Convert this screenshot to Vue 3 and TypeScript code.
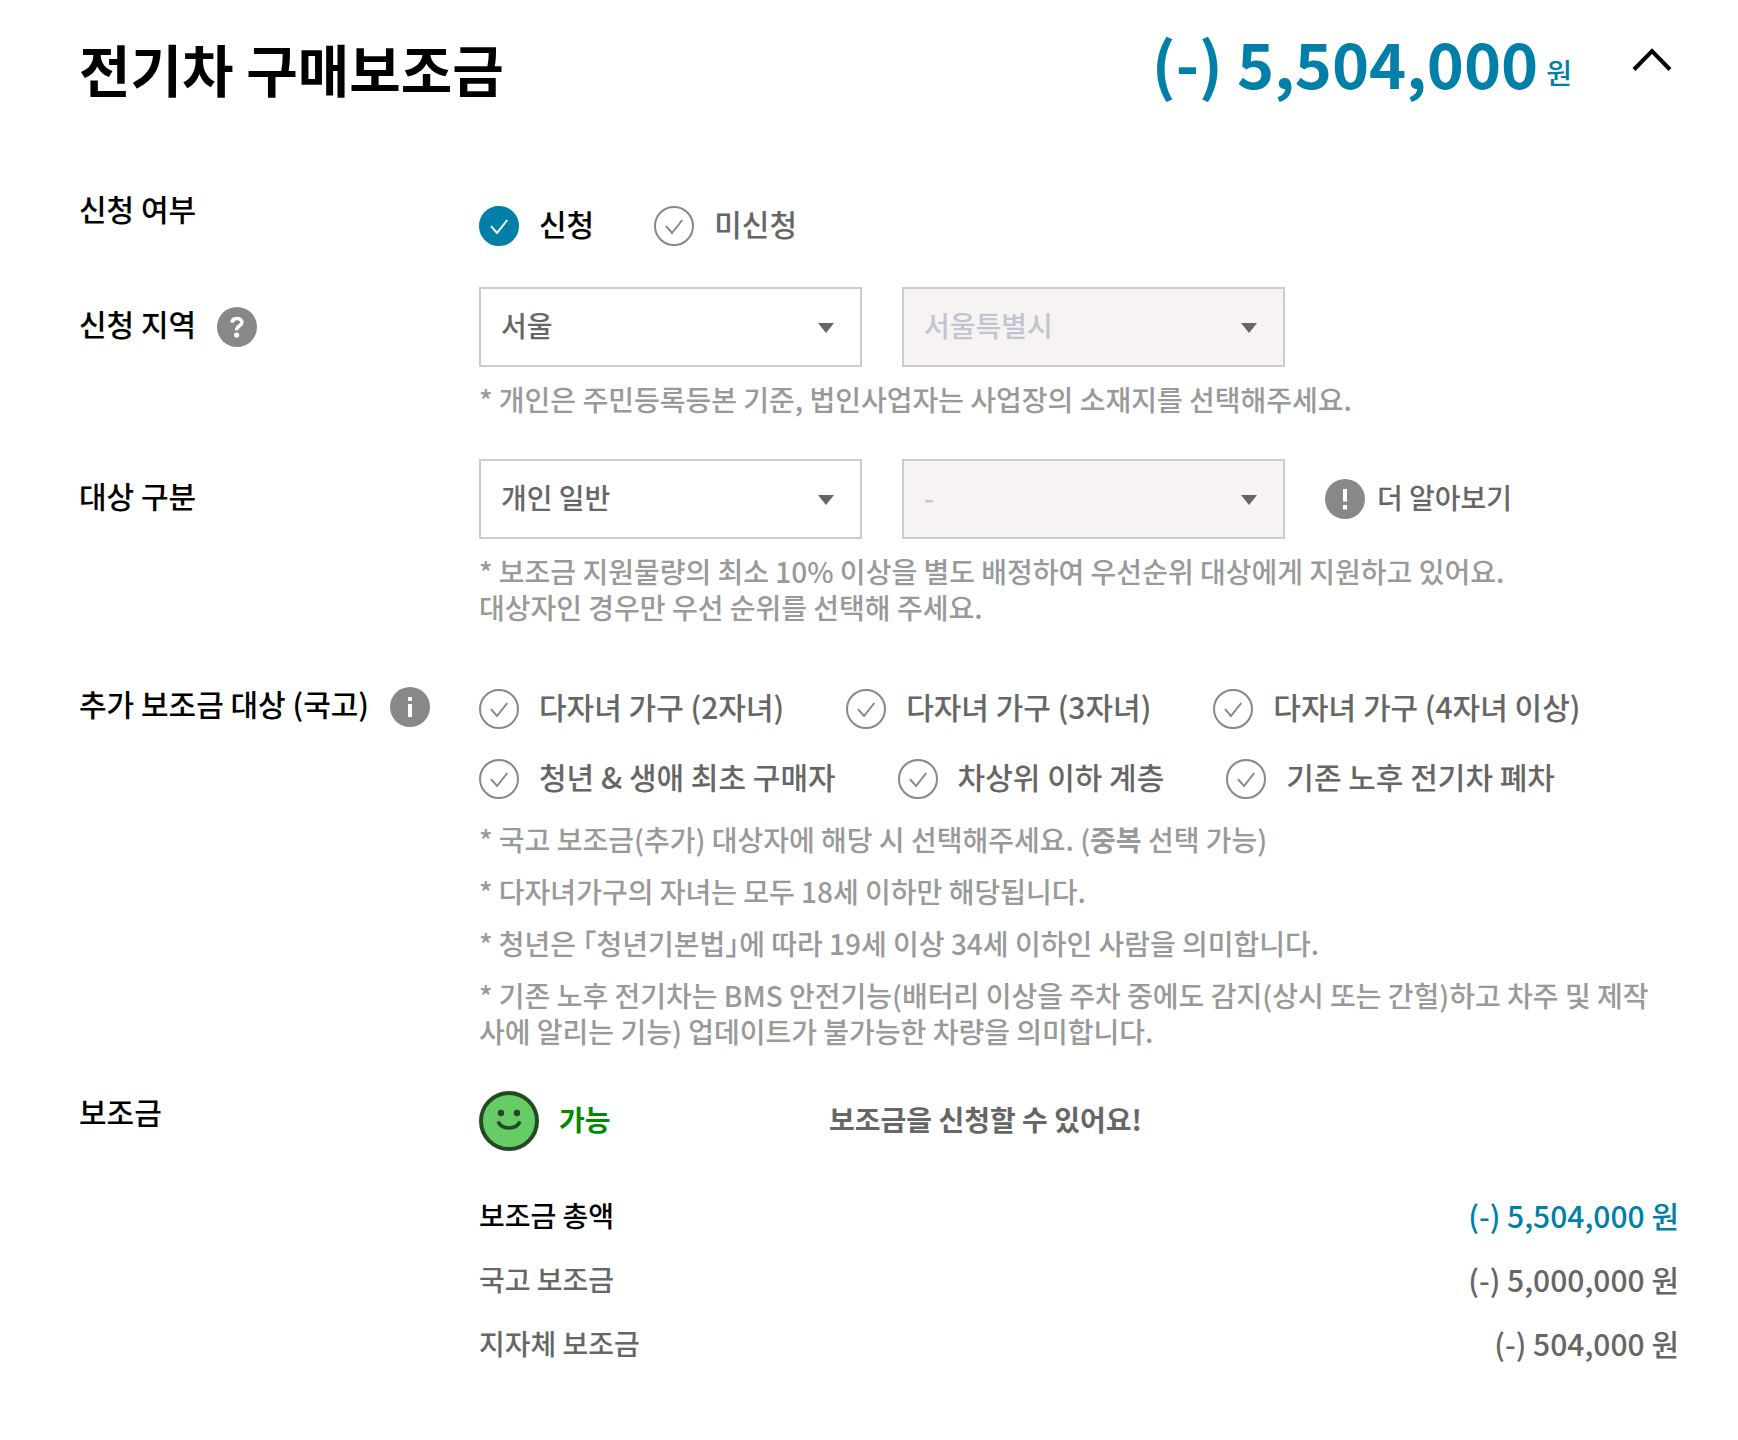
<script setup lang="ts">
import { ref } from 'vue'

interface Option {
  id: string
  label: string
}

interface Amount {
  label: string
  value: string
  total?: boolean
}

const applyOptions: Option[] = [
  { id: 'apply', label: '신청' },
  { id: 'skip', label: '미신청' },
]

const extraRows: Option[][] = [
  [
    { id: 'child2', label: '다자녀 가구 (2자녀)' },
    { id: 'child3', label: '다자녀 가구 (3자녀)' },
    { id: 'child4', label: '다자녀 가구 (4자녀 이상)' },
  ],
  [
    { id: 'youth', label: '청년 & 생애 최초 구매자' },
    { id: 'lowIncome', label: '차상위 이하 계층' },
    { id: 'oldEv', label: '기존 노후 전기차 폐차' },
  ],
]

const targetNote =
  '* 보조금 지원물량의 최소 10% 이상을 별도 배정하여 우선순위 대상에게 지원하고 있어요.\n대상자인 경우만 우선 순위를 선택해 주세요.'

const amounts: Amount[] = [
  { label: '보조금 총액', value: '(-) 5,504,000 원', total: true },
  { label: '국고 보조금', value: '(-) 5,000,000 원' },
  { label: '지자체 보조금', value: '(-) 504,000 원' },
]

const open = ref(true)
const applied = ref('apply')
const extras = ref<string[]>([])
const region = ref('서울')
const target = ref('개인 일반')
</script>

<template>
  <section class="subsidy">
    <header class="head">
      <h2 class="title">전기차 구매보조금</h2>
      <p class="price"><strong>(-) 5,504,000</strong><span>원</span></p>
      <button class="toggle" type="button" aria-label="접기" :aria-expanded="open" @click="open = !open">
        <svg width="40" height="24" viewBox="0 0 40 24" fill="none" stroke="#000" stroke-width="4">
          <path d="M2 21.5 20 3 38 21.5" />
        </svg>
      </button>
    </header>

    <div v-if="open" class="rows">
      <div class="row apply" role="radiogroup" aria-labelledby="lb-apply">
        <div id="lb-apply" class="label">신청 여부</div>
        <div class="options">
          <label v-for="o in applyOptions" :key="o.id" class="option">
            <span class="check">
              <input v-model="applied" type="radio" name="apply" :value="o.id" />
              <svg viewBox="0 0 40 40" fill="none" stroke="currentColor"><path d="M12 20.2 18 27 28.3 14" /></svg>
            </span>
            <span class="text">{{ o.label }}</span>
          </label>
        </div>
      </div>

      <div class="row region">
        <div class="label">
          <label for="region">신청 지역</label>
          <button class="icon" type="button" aria-label="도움말">
            <svg viewBox="0 0 40 40" fill="none">
              <circle cx="20" cy="20" r="20" fill="#888" />
              <path d="M15 15.400c.4-2.800 2.500-3.900 5-3.900 2.900 0 4.900 1.500 4.900 4 0 3.500-5.300 3.400-5.300 7.700" stroke="#fff" stroke-width="3.600" />
              <circle cx="19.600" cy="28" r="2.600" fill="#fff" />
            </svg>
          </button>
        </div>
        <div>
          <div class="selects">
            <div class="select">
              <select id="region" v-model="region"><option>서울</option></select>
              <svg width="16" height="10" viewBox="0 0 16 10"><path d="M0 0h16L8 10z" fill="#666" /></svg>
            </div>
            <div class="select">
              <select aria-label="시군구" disabled><option>서울특별시</option></select>
              <svg width="16" height="10" viewBox="0 0 16 10"><path d="M0 0h16L8 10z" fill="#666" /></svg>
            </div>
          </div>
          <p class="note">* 개인은 주민등록등본 기준, 법인사업자는 사업장의 소재지를 선택해주세요.</p>
        </div>
      </div>

      <div class="row target">
        <div class="label"><label for="target">대상 구분</label></div>
        <div>
          <div class="selects">
            <div class="select">
              <select id="target" v-model="target"><option>개인 일반</option></select>
              <svg width="16" height="10" viewBox="0 0 16 10"><path d="M0 0h16L8 10z" fill="#666" /></svg>
            </div>
            <div class="select">
              <select aria-label="우선 순위" disabled><option>-</option></select>
              <svg width="16" height="10" viewBox="0 0 16 10"><path d="M0 0h16L8 10z" fill="#666" /></svg>
            </div>
            <button class="more" type="button">
              <svg width="40" height="40" viewBox="0 0 40 40">
                <circle cx="20" cy="20" r="20" fill="#888" />
                <path d="M18 10h4v12.500h-4zM18 26h4v4.500h-4z" fill="#fff" />
              </svg>
              <span>더 알아보기</span>
            </button>
          </div>
          <p class="note">{{ targetNote }}</p>
        </div>
      </div>

      <div class="row extra" role="group" aria-labelledby="lb-extra">
        <div class="label">
          <span id="lb-extra">추가 보조금 대상 (국고)</span>
          <button class="icon" type="button" aria-label="안내">
            <svg viewBox="0 0 40 40">
              <circle cx="20" cy="20" r="20" fill="#888" />
              <path d="M18 10h4v4h-4zM18 17h4v13h-4z" fill="#fff" />
            </svg>
          </button>
        </div>
        <div class="choices">
          <div v-for="(row, i) in extraRows" :key="i" class="options">
            <label v-for="o in row" :key="o.id" class="option">
              <span class="check">
                <input v-model="extras" type="checkbox" :value="o.id" />
                <svg viewBox="0 0 40 40" fill="none" stroke="currentColor"><path d="M12 20.2 18 27 28.3 14" /></svg>
              </span>
              <span class="text">{{ o.label }}</span>
            </label>
          </div>
          <div class="notes">
            <p class="note">* 국고 보조금(추가) 대상자에 해당 시 선택해주세요. (<b>중복</b> 선택 가능)</p>
            <p class="note">* 다자녀가구의 자녀는 모두 18세 이하만 해당됩니다.</p>
            <p class="note">* 청년은 「청년기본법」에 따라 19세 이상 34세 이하인 사람을 의미합니다.</p>
            <p class="note">* 기존 노후 전기차는 BMS 안전기능(배터리 이상을 주차 중에도 감지(상시 또는 간헐)하고 차주 및 제작사에 알리는 기능) 업데이트가 불가능한 차량을 의미합니다.</p>
          </div>
        </div>
      </div>

      <div class="row result">
        <div class="label">보조금</div>
        <div>
          <div class="status">
            <div class="state">
              <svg width="60" height="60" viewBox="0 0 60 60" fill="none">
                <circle cx="30" cy="30" r="28" fill="#66cc66" stroke="#224a22" stroke-width="4" />
                <circle cx="22" cy="22" r="3.200" fill="#224a22" />
                <circle cx="38" cy="22" r="3.200" fill="#224a22" />
                <path d="M19 30.500c2 4.500 6 6.500 11 6.500s9-2 11-6.500" stroke="#224a22" stroke-width="3.500" />
              </svg>
              <strong>가능</strong>
            </div>
            <strong class="message">보조금을 신청할 수 있어요!</strong>
          </div>
          <table class="amounts">
            <tbody>
              <tr v-for="a in amounts" :key="a.label" :class="{ total: a.total }">
                <th scope="row">{{ a.label }}</th>
                <td>{{ a.value }}</td>
              </tr>
            </tbody>
          </table>
        </div>
      </div>
    </div>
  </section>
</template>

<style>
body {
  background: #fff;
}
</style>

<style scoped>
.subsidy {
  box-sizing: border-box;
  padding: 28px 59px 60px 79px;
  font-family: 'Noto Sans CJK KR', sans-serif;
  font-weight: 500;
  font-size: 28px;
  line-height: 36px;
  color: #666;
}
.subsidy button,
.subsidy select {
  font: inherit;
  color: inherit;
}
.subsidy button {
  padding: 0;
  border: 0;
  background: none;
  cursor: pointer;
}
.subsidy svg {
  display: block;
}
.head {
  display: flex;
  align-items: center;
  height: 80px;
}
.title {
  flex: 1;
  margin: 0;
  font-size: 56px;
  line-height: 80px;
  font-weight: 700;
  color: #000;
}
.price {
  display: flex;
  align-items: flex-end;
  gap: 8px;
  margin: 0 60px 12px 0;
  color: #007fa8;
}
.price strong {
  font-size: 63px;
  line-height: 72px;
  font-weight: 700;
}
.price span {
  margin-bottom: 8px;
}
.toggle {
  width: 40px;
  margin: 0 7px 16px 0;
}
.row {
  display: grid;
  grid-template-columns: 400px minmax(0, 1fr);
  align-items: start;
}
.label {
  display: flex;
  align-items: center;
  gap: 21px;
  height: 40px;
  font-size: 30px;
  line-height: 36px;
  color: #000;
}
.label > label,
.label > span {
  margin-bottom: 8px;
}
.icon,
.icon svg {
  width: 40px;
  height: 40px;
}
.apply {
  padding-top: 80px;
}
.apply .options {
  margin-top: 18px;
}
.region {
  margin-top: 41px;
}
.region .label,
.target .label {
  margin-top: 20px;
}
.target {
  margin-top: 42px;
}
.extra {
  margin-top: 62px;
}
.choices {
  padding-top: 2px;
}
.result {
  margin-top: 42px;
}
.options {
  display: flex;
  flex-wrap: wrap;
  gap: 20px 60px;
}
.choices .options {
  column-gap: 62px;
}
.options + .options {
  margin-top: 30px;
}
.option {
  display: flex;
  align-items: center;
  gap: 20px;
  height: 40px;
  font-size: 30px;
  cursor: pointer;
}
.option .text {
  margin-bottom: 6px;
}
.option:has(input:checked) {
  color: #000;
}
.check {
  display: grid;
}
.check > * {
  grid-area: 1 / 1;
  width: 40px;
  height: 40px;
}
.check input {
  appearance: none;
  box-sizing: border-box;
  margin: 0;
  border: 2px solid #888;
  border-radius: 50%;
  background: #fff;
}
.check svg {
  color: #888;
  stroke-width: 2;
  pointer-events: none;
}
.check input:checked {
  border-color: #007fa8;
  background: #007fa8;
}
.check input:checked + svg {
  color: #fff;
}
.selects {
  display: flex;
  align-items: center;
  gap: 40px;
}
.select {
  display: grid;
  align-items: center;
  width: 383px;
}
.select > * {
  grid-area: 1 / 1;
}
.select select {
  appearance: none;
  box-sizing: border-box;
  width: 100%;
  height: 80px;
  padding: 0 60px 4px 20px;
  border: 2px solid #ccc;
  border-radius: 0;
  background: #fff;
}
.subsidy select:disabled {
  background: #f6f3f2;
  color: #c1c5d0;
  opacity: 1;
}
.select svg {
  justify-self: end;
  margin: 2px 28px 0 0;
  pointer-events: none;
}
.subsidy .more {
  display: flex;
  align-items: center;
  gap: 12px;
}
.more span {
  margin-bottom: 4px;
}
.note {
  margin: 14px 0 0;
  color: #999;
  white-space: pre-line;
  font-feature-settings: 'halt';
}
.notes {
  display: grid;
  gap: 16px;
  margin-top: 22px;
  padding-right: 20px;
}
.notes .note {
  margin: 0;
}
.status {
  display: flex;
  align-items: center;
  height: 60px;
}
.state {
  display: flex;
  align-items: center;
  gap: 20px;
  width: 350px;
  color: #008a00;
}
.status strong {
  margin-bottom: 4px;
  font-weight: 700;
}
.amounts {
  width: 100%;
  margin-top: 32px;
  border-collapse: collapse;
}
.amounts th,
.amounts td {
  height: 64px;
  padding: 0;
  font-weight: 500;
  text-align: left;
}
.amounts td {
  font-size: 30px;
  text-align: right;
}
.total th {
  color: #000;
}
.total td {
  color: #007fa8;
}
</style>
